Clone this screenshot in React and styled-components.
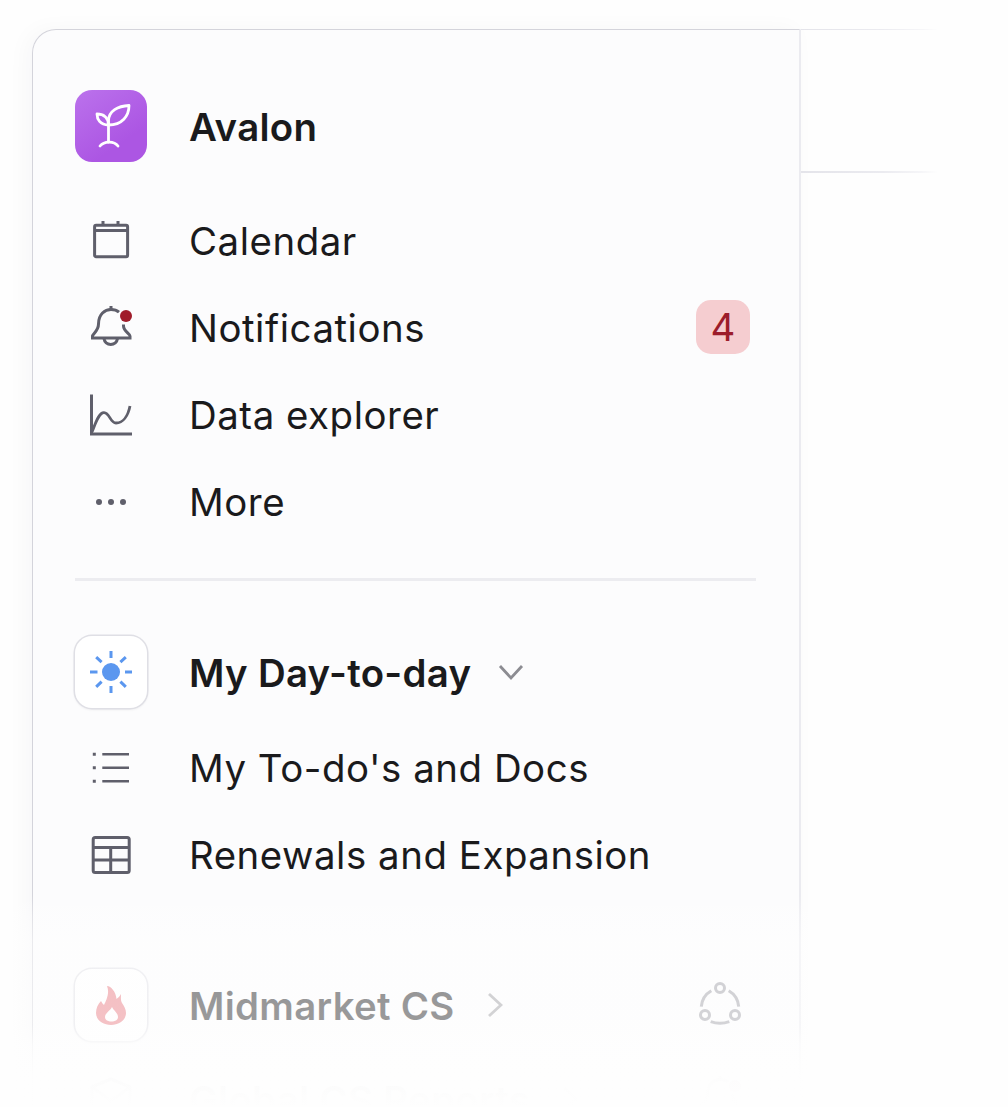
import React from "react";
import styled, { createGlobalStyle } from "styled-components";

const Global = createGlobalStyle`
  html, body { margin: 0; padding: 0; background: #fefefe; }
  body { font-family: Inter, "Noto Sans", sans-serif; color: #1a1a1c; }
`;

const Page = styled.div`
  position: relative;
  width: 1008px;
  height: 1107px;
  overflow: hidden;
  background: #fefefe;
`;
const Frame = styled.div`
  display: flex;
  align-items: flex-start;
  padding: 29px 0 0 32px;
`;
const Sidebar = styled.nav`
  box-sizing: border-box;
  width: 769px;
  height: 1300px;
  flex: none;
  padding: 60px 43px 0 42px;
  background: #fcfcfd;
  border-top: 1.5px solid #d4d4db;
  border-left: 1.5px solid #d4d4db;
  border-right: 2.5px solid #ebebf0;
  border-top-left-radius: 24px;
  box-shadow: -6px 0 22px rgba(30, 30, 50, 0.03);
`;
const SidePane = styled.div`
  flex: none;
  width: 136px;
`;
const PaneHeader = styled.div`
  box-sizing: border-box;
  height: 144px;
  border-style: solid;
  border-width: 1px 0 2px;
  border-image: linear-gradient(90deg, #e4e4ea 0%, #ebebf0 60%, rgba(240, 240, 244, 0.6) 88%, rgba(255, 255, 255, 0) 100%) 1;
`;
const Brand = styled.div`
  display: flex;
  align-items: center;
  gap: 42px;
  height: 72px;
  margin-bottom: 36px;
`;
const Logo = styled.div`
  width: 72px;
  height: 72px;
  flex: none;
  border-radius: 17px;
  background: linear-gradient(145deg, #bb72ec 0%, #ac56e3 70%);
  display: flex;
`;
const Title = styled.span`
  font-size: 38.4px;
  line-height: 46px;
  font-weight: 600;
  letter-spacing: 0.3px;
  padding-top: 2px;
  color: #1a1a1c;
  white-space: nowrap;
`;
const Row = styled.div`
  display: flex;
  align-items: center;
  gap: 42px;
  height: 87px;
  padding-right: 6px;
`;
const IconSlot = styled.span`
  width: 72px;
  flex: none;
  display: flex;
  justify-content: center;
  margin-right: ${(p) => p.$gap || 0}px;
`;
const Label = styled.span`
  font-size: 38.4px;
  line-height: 46px;
  font-weight: 400;
  letter-spacing: 0.54px;
  padding-bottom: 2px;
  color: #1a1a1c;
  white-space: nowrap;
`;
const Badge = styled.span`
  margin-left: auto;
  margin-top: -3px;
  width: 54px;
  height: 54px;
  border-radius: 15px;
  background: #f5cdd0;
  color: #9c1c2b;
  font-size: 38.4px;
  line-height: 54px;
  text-align: center;
`;
const Divider = styled.hr`
  border: 0;
  height: 3px;
  margin: 32px 0 55px;
  background: #ececf0;
`;
const SectionHead = styled.div`
  display: flex;
  align-items: center;
  height: 72px;
  margin-bottom: ${(p) => p.$after}px;
  padding-right: 6px;
`;
const TileSlot = styled.div`
  width: 72px;
  height: 72px;
  flex: none;
  margin-right: 42px;
  box-sizing: border-box;
  border-radius: 17px;
  background: #fff;
  box-shadow: 0 0 0 1.5px #dfdfe5, 0 1px 3px rgba(30, 30, 50, 0.14);
  display: flex;
  align-items: center;
  justify-content: center;
`;
const Caret = styled.span`
  display: flex;
  margin-left: ${(p) => (p.$soft ? 32 : 27)}px;
  opacity: ${(p) => (p.$soft ? 0.65 : 1)};
`;
const TrailIcon = styled.span`
  display: flex;
  margin-left: auto;
  margin-right: 6px;
  opacity: 0.6;
`;
const Spacer = styled.div`
  height: ${(p) => p.$h}px;
`;
const Fade = styled.div`
  position: absolute;
  left: 0;
  right: 0;
  top: 895px;
  bottom: 0;
  pointer-events: none;
  background: linear-gradient(
    180deg,
    rgba(254, 254, 254, 0) 0px,
    rgba(254, 254, 254, 0.3) 20px,
    rgba(254, 254, 254, 0.52) 45px,
    rgba(254, 254, 254, 0.56) 130px,
    rgba(254, 254, 254, 0.85) 150px,
    rgba(254, 254, 254, 0.985) 180px,
    rgba(254, 254, 254, 1) 212px
  );
`;

const Svg = ({ children, size = 48, ...rest }) => (
  <svg width={size} height={size} viewBox={`0 0 ${size} ${size}`} fill="none" stroke="#5f5f6b" strokeWidth="3" {...rest}>
    {children}
  </svg>
);

const Sprout = () => (
  <svg width="72" height="72" viewBox="0 0 72 72" fill="none" stroke="#fff" strokeWidth="2.8" strokeLinecap="round" strokeLinejoin="round">
    <path d="M33.5 34V52" />
    <path d="M33.5 35C25 35 22 29 22 24C28 24 33.5 27 33.5 35Z" />
    <path d="M33.5 35V31C33.5 21 43 16 54 15.5C54 26 47 35 33.5 35Z" />
    <path d="M25 56C29 51 39 50.5 43 56" />
  </svg>
);
const Calendar = () => (
  <Svg>
    <rect x="7.6" y="7.2" width="33" height="31.5" rx="1.5" />
    <path d="M7.6 12.4H40.6M16 3V7.5M31 3V7.5" />
  </Svg>
);
const Bell = () => (
  <Svg style={{ overflow: "visible" }}>
    <path d="M32 7.2C30 5.4 27 4.5 24 4.5C18 4.5 11.5 9 11.5 19C11.5 26 5.5 29 5.5 31V33H43V31C43 29 36.5 26 36.5 21V19.5" />
    <path d="M17 33.5A6.8 6.8 0 0 0 30.5 33.5M24 4V1" />
    <circle cx="39" cy="11" r="6" fill="#a01c2a" stroke="none" />
  </Svg>
);
const Chart = () => (
  <Svg>
    <path d="M4.5 2.5V42H45" />
    <path d="M5 40C9 30 12 20.5 17 20.7C23 21 23 31 29 31C36 31 41 24 43 14" strokeWidth="2.8" />
  </Svg>
);
const Dots = () => (
  <Svg>
    <g fill="#5f5f6b" stroke="none">
      <circle cx="12" cy="23" r="3" />
      <circle cx="24" cy="23" r="3" />
      <circle cx="36" cy="23" r="3" />
    </g>
  </Svg>
);
const Sun = () => (
  <Svg stroke="#5b97ef">
    <circle cx="24" cy="24" r="9" fill="#5b97ef" stroke="none" />
    <path d="M24 3V10M24 38V45M3 24H10.5M38 24H45M9.2 9.2L14.6 14.2M33.4 14.2L38.8 9.2M9.2 38.8L14.6 33.6M33.4 33.6L38.8 38.8" />
  </Svg>
);
const List = () => (
  <Svg>
    <path d="M15.3 9.3H42M15.3 22.7H42M15.3 36.3H42" strokeWidth="2.6" />
    <path d="M5.8 9.3H8.8M5.8 22.7H8.8M5.8 36.3H8.8" strokeWidth="3" />
  </Svg>
);
const Table = () => (
  <Svg>
    <rect x="6.2" y="5.5" width="36" height="35" rx="2" />
    <path d="M6.2 15.5H42.2M6.2 28H42.2M23.7 15.5V40.5" />
  </Svg>
);
const Flame = () => (
  <svg width="48" height="48" viewBox="0 0 48 48">
    <path fill="#e8757d" d="M20 5C24 5 29 11 29.5 18C31 17 33 15 34 13C34 17 33.5 19 35 22C37 25 39 28 39 32C39 39 32 44 24 44C16 44 9 39 9 32C9 27 11 23 14 20C15 22 16 23 17 24C19 20 23 12 20 5Z" />
    <path fill="#fff" d="M25 26C27 30 31 32 31 36C31 39 28 40.5 24.5 40.5C21 40.5 18 39 18 36C18 32 23 30 25 26Z" />
  </svg>
);
const Orbit = () => (
  <Svg>
    <circle cx="24" cy="7" r="4.5" />
    <circle cx="9" cy="34" r="4.5" />
    <circle cx="39" cy="34" r="4.5" />
    <path d="M15.3 9.7C9.5 13 5.8 19 5.3 25.7M32.7 9.7C38.5 13 42.2 19 42.7 25.7M14.7 40.7C20 42.6 28 42.6 33.3 40.7" />
  </Svg>
);
const Mail = () => (
  <Svg>
    <path d="M5 12L24 4L43 12V38H5Z" />
    <path d="M5 12L24 26L43 12" />
  </Svg>
);
const ChevronDown = () => (
  <svg width="26" height="18" viewBox="0 0 26 18" fill="none" stroke="#8c8c92" strokeWidth="2.8">
    <path d="M2 3L13 15L24 3" />
  </svg>
);
const ChevronRight = () => (
  <svg width="16" height="26" viewBox="0 0 16 26" fill="none" stroke="#6a6a70" strokeWidth="2.8">
    <path d="M2 2L14 13L2 24" />
  </svg>
);

const topItems = [
  { label: "Calendar", Icon: Calendar },
  { label: "Notifications", Icon: Bell, badge: 4 },
  { label: "Data explorer", Icon: Chart },
  { label: "More", Icon: Dots },
];
const dayItems = [
  { label: "My To-do's and Docs", Icon: List },
  { label: "Renewals and Expansion", Icon: Table },
];

const NavRow = ({ label, Icon, badge }) => (
  <Row>
    <IconSlot>
      <Icon />
    </IconSlot>
    <Label>{label}</Label>
    {badge ? <Badge>{badge}</Badge> : null}
  </Row>
);

export default function App() {
  return (
    <Page>
      <Global />
      <Frame>
        <Sidebar>
          <Brand>
            <Logo>
              <Sprout />
            </Logo>
            <Title>Avalon</Title>
          </Brand>
          {topItems.map((item) => (
            <NavRow key={item.label} {...item} />
          ))}
          <Divider />
          <SectionHead $after={17}>
            <TileSlot>
              <Sun />
            </TileSlot>
            <Title>My Day-to-day</Title>
            <Caret>
              <ChevronDown />
            </Caret>
          </SectionHead>
          {dayItems.map((item) => (
            <NavRow key={item.label} {...item} />
          ))}
          <Spacer $h={70} />
          <SectionHead $after={22}>
            <TileSlot>
              <Flame />
            </TileSlot>
            <Title>Midmarket CS</Title>
            <Caret $soft>
              <ChevronRight />
            </Caret>
            <TrailIcon>
              <Orbit />
            </TrailIcon>
          </SectionHead>
          <SectionHead $after={0}>
            <IconSlot $gap={42}>
              <Mail />
            </IconSlot>
            <Title>Global CS Reports</Title>
            <Caret $soft>
              <ChevronRight />
            </Caret>
            <TrailIcon>
              <Bell />
            </TrailIcon>
          </SectionHead>
        </Sidebar>
        <SidePane>
          <PaneHeader />
        </SidePane>
      </Frame>
      <Fade />
    </Page>
  );
}
